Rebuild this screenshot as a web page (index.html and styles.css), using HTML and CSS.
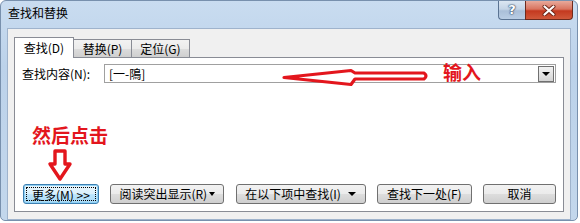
FILE: index.html
```html
<!DOCTYPE html>
<html lang="zh-CN">
<head>
  <meta charset="UTF-8">
  <title>查找和替换</title>
  <link rel="stylesheet" href="styles.css">
</head>
<body>

<div class="window">
  <div class="titlebar">
    <span class="title">查找和替换</span>
    <div class="caption-buttons">
      <div class="btn-help">?</div>
      <div class="btn-close">
        <svg width="14" height="11" viewBox="0 0 14 11">
          <path d="M2.5 1.5 L11.5 9.5 M11.5 1.5 L2.5 9.5" stroke="#6b2416" stroke-width="4" stroke-linecap="round"/>
          <path d="M2.5 1.5 L11.5 9.5 M11.5 1.5 L2.5 9.5" stroke="#ffffff" stroke-width="2.2" stroke-linecap="round"/>
        </svg>
      </div>
    </div>
  </div>

  <div class="client">
    <div class="tabs">
      <div class="tab active">查找(D)</div>
      <div class="tab">替换(P)</div>
      <div class="tab">定位(G)</div>
    </div>

    <div class="panel">
      <div class="find-row">
        <span class="find-label">查找内容(N):</span>
        <div class="combo">
          <span class="combo-text">[一-隝]</span>
          <span class="combo-drop"></span>
        </div>
      </div>

      <div class="button-row">
        <button class="btn btn-more"><span class="focus-ring">更多(M) &gt;&gt;</span></button>
        <button class="btn btn-read">阅读突出显示(R)<span class="tri"></span></button>
        <button class="btn btn-in">在以下项中查找(I)<span class="tri tri-wide"></span></button>
        <button class="btn btn-next">查找下一处(F)</button>
        <button class="btn btn-cancel">取消</button>
      </div>
    </div>
  </div>
</div>

<!-- hand-drawn red notes on top of the dialog -->
<svg class="notes" width="580" height="223" viewBox="0 0 580 223">
  <path d="M284 77.5 L351 70.5 L355 73 L424 73 Q428 76 424 79 L355 79 L351 84.5 Z"
        fill="#ffffff" stroke="#e3161d" stroke-width="3.2" stroke-linejoin="round"/>
  <path d="M55 151 L65 151 L65 164 L70 164 L60 179 L50 164 L55 164 Z"
        fill="#ffffff" stroke="#e3161d" stroke-width="3.4" stroke-linejoin="round"/>
</svg>
<div class="note note-input">输入</div>
<div class="note note-click">然后点击</div>

</body>
</html>
```

FILE: styles.css
```css
body {
  margin: 0;
  background: #ffffff;
  font-family: "Noto Sans CJK SC", "Liberation Sans", sans-serif;
  font-size: 12px;
  color: #000;
}

.window {
  width: 576px;
  height: 219px;
  border: 1px solid #7890ad;
  border-radius: 6px 6px 5px 5px;
  background: linear-gradient(180deg, #c9dcf0 0%, #bcd2ea 30%, #c3d7ec 100%);
}

.titlebar {
  display: flex;
  justify-content: space-between;
  height: 27px;
}

.title {
  padding: 4px 0 0 7px;
  line-height: 16px;
  font-size: 12px;
}

.caption-buttons {
  display: flex;
  margin-right: 4px;
  align-self: flex-start;
}

.btn-help {
  width: 26px;
  height: 18px;
  border: 1px solid #5a7392;
  border-top: none;
  border-right: none;
  border-radius: 0 0 0 4px;
  background: linear-gradient(180deg, #dbe6f2 0%, #c4d4e6 45%, #aabfd8 55%, #b9cde4 100%);
  color: #ffffff;
  font-family: "DejaVu Sans", sans-serif;
  font-weight: bold;
  font-size: 13px;
  line-height: 18px;
  text-align: center;
  text-shadow: 0 0 1px #2b4565, 0 0 1px #2b4565, 0 0 2px #2b4565;
}

.btn-close {
  width: 46px;
  height: 18px;
  border: 1px solid #6e2a1c;
  border-top: none;
  border-radius: 0 0 4px 0;
  background: linear-gradient(180deg, #e8a99b 0%, #d9745f 45%, #c4391f 55%, #d0583a 100%);
  display: flex;
  align-items: center;
  justify-content: center;
}

.client {
  margin: 0 6px;
  height: 182px;
  border: 1px solid #9fb3cc;
  background: #f0f0f0;
  padding: 8px 6px 0;
}

.tabs {
  display: flex;
  align-items: flex-end;
  height: 20px;
}

.tab {
  width: 57px;
  height: 17px;
  border: 1px solid #898c95;
  border-bottom: none;
  border-left: none;
  background: linear-gradient(180deg, #f2f2f2 0%, #ebebeb 50%, #dddddd 51%, #cfcfcf 100%);
  line-height: 17px;
  text-align: center;
}

.tab.active {
  position: relative;
  z-index: 1;
  width: 58px;
  height: 20px;
  margin-bottom: -1px;
  border-left: 1px solid #898c95;
  background: #ffffff;
  line-height: 19px;
}

.panel {
  height: 146px;
  border: 1px solid #898c95;
  background: #ffffff;
  padding: 0 7px 7px 7px;
  display: flex;
  flex-direction: column;
  justify-content: space-between;
}

.find-row {
  display: flex;
  align-items: center;
  margin-top: 6px;
}

.find-label {
  width: 82px;
  line-height: 19px;
}

.combo {
  flex: 1;
  height: 17px;
  border: 1px solid #a0a0a0;
  display: flex;
  justify-content: space-between;
  align-items: center;
  padding-left: 4px;
}

.combo-text {
  line-height: 17px;
}

.combo-drop {
  width: 14px;
  height: 14px;
  margin-right: 1px;
  border: 1px solid #707070;
  background: linear-gradient(180deg, #f2f2f2 0%, #e4e4e4 50%, #d4d4d4 100%);
  position: relative;
}

.combo-drop::after {
  content: "";
  position: absolute;
  left: 3px;
  top: 5px;
  border-left: 4px solid transparent;
  border-right: 4px solid transparent;
  border-top: 4px solid #000;
}

.button-row {
  display: flex;
  justify-content: space-between;
  padding-left: 1px;
}

.btn {
  height: 20px;
  padding: 0;
  border: 1px solid #707070;
  border-radius: 3px;
  background: linear-gradient(180deg, #f2f2f2 0%, #ebebeb 50%, #dddddd 51%, #cfcfcf 100%);
  font-family: "Noto Sans CJK SC", "Liberation Sans", sans-serif;
  font-size: 12px;
  line-height: 18px;
  color: #000;
  display: flex;
  align-items: center;
  justify-content: center;
}

.btn-more {
  width: 76px;
  border-color: #3c7fb1;
  background: linear-gradient(180deg, #eaf6fd 0%, #d9f0fc 50%, #bee6fd 51%, #a7d9f5 100%);
  box-shadow: inset 0 0 0 1px #8fd0f4;
  padding: 2px;
}

.focus-ring {
  flex: 1;
  align-self: stretch;
  border: 1px dotted #000;
  line-height: 14px;
}

.btn-read { width: 114px; }
.btn-in { width: 130px; }
.btn-next { width: 95px; }
.btn-cancel { width: 73px; }

.tri {
  display: inline-block;
  margin-left: 2px;
  border-left: 3px solid transparent;
  border-right: 3px solid transparent;
  border-top: 4px solid #000;
}

.tri-wide {
  margin-left: 7px;
  border-left-width: 4px;
  border-right-width: 4px;
}

.notes {
  position: absolute;
  left: 0;
  top: 0;
  pointer-events: none;
}

.note {
  position: absolute;
  color: #e3161d;
  font-weight: bold;
  font-size: 19px;
  line-height: 19px;
}

.note-input {
  left: 443px;
  top: 62px;
}

.note-click {
  left: 32px;
  top: 125px;
}
```
